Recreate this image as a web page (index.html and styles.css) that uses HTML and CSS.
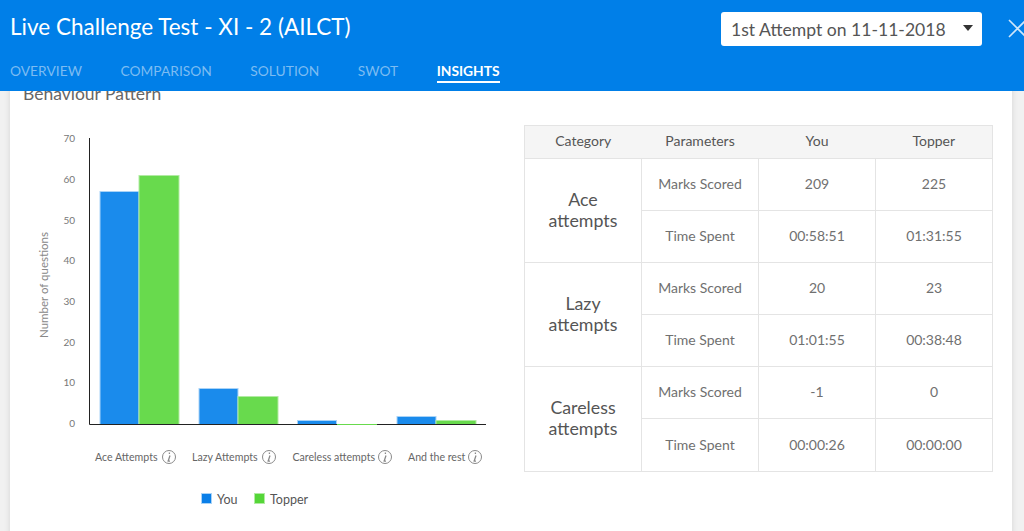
FILE: index.html
```html
<!DOCTYPE html>
<html lang="en">
<head>
    <meta charset="UTF-8">
    <title>Live Challenge Test - Insights</title>
    <link rel="stylesheet" href="styles.css">
</head>
<body>
<header class="top-bar">
    <div class="top-row">
        <h1 class="test-title">Live Challenge Test - XI - 2 (AILCT)</h1>
        <div class="top-actions">
            <div class="attempt-select">
                <span>1st Attempt on 11-11-2018</span>
                <i class="caret"></i>
            </div>
            <svg class="close-icon" width="22" height="22" viewBox="0 0 22 22">
                <path d="M2 2 L19 19 M19 2 L2 19" stroke="#cfe6fa" stroke-width="1.6" fill="none"/>
            </svg>
        </div>
    </div>
    <nav class="tabs">
        <a class="tab">OVERVIEW</a>
        <a class="tab">COMPARISON</a>
        <a class="tab">SOLUTION</a>
        <a class="tab">SWOT</a>
        <a class="tab active">INSIGHTS</a>
    </nav>
</header>

<main class="card">
    <h2 class="card-title">Behaviour Pattern</h2>
    <div class="card-body">
        <svg class="chart" width="480" height="400" viewBox="0 0 480 400">
            <g class="y-labels">
                <text x="55" y="22">70</text>
                <text x="55" y="63">60</text>
                <text x="55" y="104">50</text>
                <text x="55" y="144">40</text>
                <text x="55" y="185">30</text>
                <text x="55" y="226">20</text>
                <text x="55" y="266">10</text>
                <text x="55" y="307">0</text>
            </g>
            <text class="y-title" transform="translate(28 165) rotate(-90)">Number of questions</text>

            <g fill="#1a8bec" stroke="#a9d3f7" stroke-width="1">
                <rect x="80" y="71.5" width="39" height="233"/>
                <rect x="179" y="268.5" width="39" height="36"/>
                <rect x="277.5" y="300.5" width="39" height="4"/>
                <rect x="377" y="296.5" width="39" height="8"/>
            </g>
            <g fill="#68da4d" stroke="#b2eba3" stroke-width="1">
                <rect x="119" y="55.5" width="40" height="249"/>
                <rect x="218" y="276.5" width="40" height="28"/>
                <rect x="416" y="300.5" width="40" height="4"/>
            </g>

            <path d="M69.5 18 V304.5 H466" stroke="#222" stroke-width="1" fill="none"/>
            <path d="M317 304.5 H357" stroke="#68da4d" stroke-width="1" fill="none"/>

            <g class="x-labels">
                <text x="75" y="341">Ace Attempts</text>
                <text x="172" y="341">Lazy Attempts</text>
                <text x="272.5" y="341">Careless attempts</text>
                <text x="388" y="341">And the rest</text>
            </g>
            <g class="info-icons" fill="none" stroke="#8a8a8a">
                <g transform="translate(149 337)"><circle r="6.5"/><path class="info-i" d="M0.4 -4.5 V-3 M1 -1.5 L-0.8 4 M-1.5 4.2 H1"/></g>
                <g transform="translate(249 337)"><circle r="6.5"/><path class="info-i" d="M0.4 -4.5 V-3 M1 -1.5 L-0.8 4 M-1.5 4.2 H1"/></g>
                <g transform="translate(365 337)"><circle r="6.5"/><path class="info-i" d="M0.4 -4.5 V-3 M1 -1.5 L-0.8 4 M-1.5 4.2 H1"/></g>
                <g transform="translate(455 337)"><circle r="6.5"/><path class="info-i" d="M0.4 -4.5 V-3 M1 -1.5 L-0.8 4 M-1.5 4.2 H1"/></g>
            </g>

            <rect x="181.5" y="373.5" width="10" height="10" fill="#0a7fe8" stroke="#a9d3f7"/>
            <text class="legend" x="197" y="384">You</text>
            <rect x="234.5" y="373.5" width="10" height="10" fill="#55d638" stroke="#b2eba3"/>
            <text class="legend" x="250" y="384">Topper</text>
        </svg>

        <table class="stats">
            <thead>
                <tr><th>Category</th><th>Parameters</th><th>You</th><th>Topper</th></tr>
            </thead>
            <tbody>
                <tr><td class="category" rowspan="2">Ace<br>attempts</td><td>Marks Scored</td><td>209</td><td>225</td></tr>
                <tr><td>Time Spent</td><td>00:58:51</td><td>01:31:55</td></tr>
                <tr><td class="category" rowspan="2">Lazy<br>attempts</td><td>Marks Scored</td><td>20</td><td>23</td></tr>
                <tr><td>Time Spent</td><td>01:01:55</td><td>00:38:48</td></tr>
                <tr><td class="category" rowspan="2">Careless<br>attempts</td><td>Marks Scored</td><td>-1</td><td>0</td></tr>
                <tr class="last-row"><td>Time Spent</td><td>00:00:26</td><td>00:00:00</td></tr>
            </tbody>
        </table>
    </div>
</main>
</body>
</html>
```

FILE: styles.css
```css
* { box-sizing: border-box; }
html, body { height: 100%; }
body { margin: 0; overflow: hidden; background: #f1f1f1; font-family: "Lato", "Open Sans", sans-serif; color: #555; }

.top-bar { position: relative; z-index: 2; height: 91px; background: #007fe8; padding: 12px 0 0 10px; }
.top-row { display: flex; justify-content: space-between; align-items: flex-start; }
.test-title { margin: 0; padding-top: 1px; font-size: 22.5px; line-height: 28px; font-weight: 400; color: #fff; }
.top-actions { display: flex; align-items: center; gap: 25px; margin-right: -5px; }
.attempt-select { display: flex; justify-content: space-between; align-items: center; width: 261px; height: 34px; padding: 0 9px 0 10px; background: #fff; border-radius: 3px; font-size: 17.6px; color: #555; }
.caret { width: 0; height: 0; border-left: 5.5px solid transparent; border-right: 5.5px solid transparent; border-top: 6px solid #333; margin-top: -2px; }
.close-icon { display: block; }

.tabs { display: flex; gap: 38.5px; margin-top: 16px; }
.tab { padding-bottom: 1px; font-size: 13.8px; line-height: 18px; color: #7cbcf2; border-bottom: 2px solid transparent; }
.tab.active { color: #fff; font-weight: 700; border-bottom-color: #fff; }

.card { width: 1002px; height: 460px; margin-left: 10px; background: #fff; box-shadow: 0 0 6px rgba(0,0,0,0.12); padding-left: 13px; }
.card-title { margin: -6px 0 0; font-size: 17.5px; line-height: 18px; font-weight: 400; color: #666; }
.card-body { display: flex; align-items: flex-start; }

.chart { display: block; margin-top: 17px; margin-left: -3px; flex-shrink: 0; }
.chart text { font-family: "Lato", "Open Sans", sans-serif; }
.y-labels text { font-size: 10px; fill: #777; text-anchor: end; }
.y-title { font-size: 11.5px; fill: #888; text-anchor: middle; }
.x-labels text { font-size: 10.6px; fill: #666; }
.legend { font-size: 12.5px; fill: #555; }
.info-i { stroke-width: 1.3; }

.stats { width: 469px; margin-top: 22px; margin-left: 24px; border: 1px solid #e4e4e4; border-collapse: collapse; table-layout: fixed; font-size: 14px; }
.stats th, .stats td { text-align: center; padding: 0 0 2px; }
.stats td { border: 1px solid #e4e4e4; }
.stats th { height: 33px; background: #f5f5f5; font-weight: 400; color: #555; padding-bottom: 3px; }
.stats td { height: 52px; color: #707070; }
.stats .last-row td { height: 53px; }
.stats td.category { font-size: 17.8px; line-height: 21px; color: #555; }
```
